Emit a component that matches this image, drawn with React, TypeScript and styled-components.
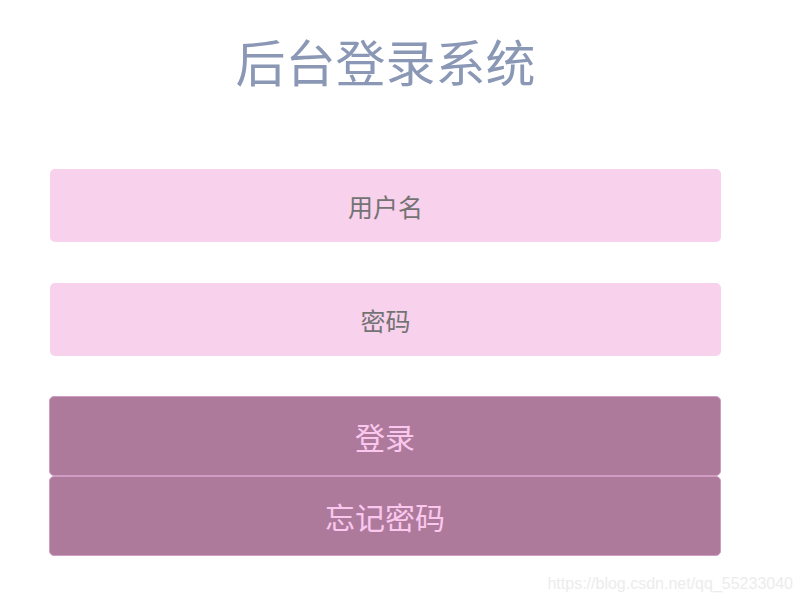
import styled, { createGlobalStyle } from 'styled-components';

const GlobalStyle = createGlobalStyle`
    html, body {
        margin: 0;
        padding: 0;
        background: #ffffff;
    }

    body {
        font-family: "Noto Sans CJK SC", "Noto Sans", sans-serif;
    }
`;

const Page = styled.div`
    width: 802px;
    height: 601px;
    box-sizing: border-box;
    padding: 0 81px 0 50px;
    display: flex;
    flex-direction: column;
    overflow: hidden;
`;

const Title = styled.h1`
    margin: 31px 0 80px;
    font-size: 50px;
    line-height: 58px;
    font-weight: 400;
    text-align: center;
    color: #8a98b6;
`;

const Form = styled.form`
    display: flex;
    flex-direction: column;
    gap: 41px;
`;

const Field = styled.input`
    width: 100%;
    height: 73px;
    box-sizing: border-box;
    border: none;
    border-radius: 5px;
    outline: none;
    background: #f8d1ec;
    font-family: inherit;
    font-size: 25px;
    text-align: center;
    color: #6e6e6e;

    &::placeholder {
        color: #737373;
    }
`;

const Actions = styled.div`
    display: flex;
    flex-direction: column;
    margin-left: -1px;
    margin-top: -1px;
`;

const Button = styled.button`
    width: 672px;
    height: 80px;
    box-sizing: border-box;
    border: 1px solid #cf9cc3;
    border-radius: 5px;
    background: #ae7a9c;
    font-family: inherit;
    font-size: 30px;
    color: #fac8ee;
    cursor: pointer;
`;

const Watermark = styled.div`
    margin-top: auto;
    margin-right: -72px;
    padding-bottom: 8px;
    text-align: right;
    font-family: "Liberation Sans", Arial, sans-serif;
    font-size: 16px;
    color: #ececec;
`;

export default function App() {
    return (
        <>
            <GlobalStyle />
            <Page>
                <Title>后台登录系统</Title>
                <Form onSubmit={e => e.preventDefault()}>
                    <Field type="text" placeholder="用户名" />
                    <Field type="password" placeholder="密码" />
                    <Actions>
                        <Button type="submit">登录</Button>
                        <Button type="button">忘记密码</Button>
                    </Actions>
                </Form>
                <Watermark>https://blog.csdn.net/qq_55233040</Watermark>
            </Page>
        </>
    );
}
